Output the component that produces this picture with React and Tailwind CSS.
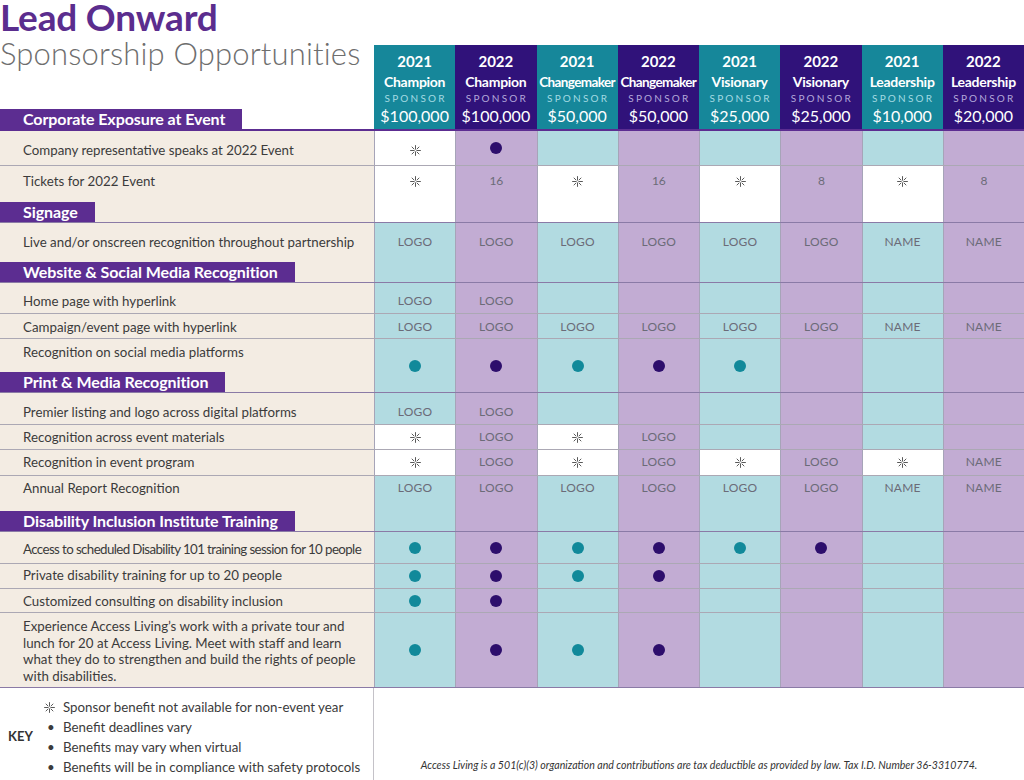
import React from 'react';

const sponsors = [
  { year: '2021', name: 'Champion', amount: '$100,000' },
  { year: '2022', name: 'Champion', amount: '$100,000' },
  { year: '2021', name: 'Changemaker', amount: '$50,000' },
  { year: '2022', name: 'Changemaker', amount: '$50,000' },
  { year: '2021', name: 'Visionary', amount: '$25,000' },
  { year: '2022', name: 'Visionary', amount: '$25,000' },
  { year: '2021', name: 'Leadership', amount: '$10,000' },
  { year: '2022', name: 'Leadership', amount: '$20,000' },
];

const L = 'LOGO';
const N = 'NAME';
const S = '*';
const D = 'dot';

const rows = [
  { label: 'Company representative speaks at 2022 Event', h: 'h-[35px]', pt: 'pt-[11px]', cells: [S, D] },
  { label: 'Tickets for 2022 Event', h: 'h-[57px]', pt: 'pt-[7px]', section: 'Signage', cells: [S, '16', S, '16', S, '8', S, '8'] },
  { label: 'Live and/or onscreen recognition throughout partnership', h: 'h-[60px]', pt: 'pt-[11px]', section: 'Website & Social Media Recognition', cells: [L, L, L, L, L, L, N, N] },
  { label: 'Home page with hyperlink', h: 'h-[31px]', pt: 'pt-[10px]', cells: [L, L] },
  { label: 'Campaign/event page with hyperlink', h: 'h-[25px]', pt: 'pt-[5px]', cells: [L, L, L, L, L, L, N, N] },
  { label: 'Recognition on social media platforms', h: 'h-[54px]', pt: 'pt-[5px]', section: 'Print & Media Recognition', cells: [D, D, D, D, D] },
  { label: 'Premier listing and logo across digital platforms', h: 'h-[32px]', pt: 'pt-[11px]', cells: [L, L] },
  { label: 'Recognition across event materials', h: 'h-[25px]', pt: 'pt-[4px]', cells: [S, L, S, L] },
  { label: 'Recognition in event program', h: 'h-[26px]', pt: 'pt-[4px]', cells: [S, L, S, L, S, L, S, N] },
  { label: 'Annual Report Recognition', h: 'h-[56px]', pt: 'pt-[4px]', section: 'Disability Inclusion Institute Training', cells: [L, L, L, L, L, L, N, N] },
  { label: 'Access to scheduled Disability 101 training session for 10 people', h: 'h-[32px]', pt: 'pt-[9px]', tight: true, cells: [D, D, D, D, D, D] },
  { label: 'Private disability training for up to 20 people', h: 'h-[25px]', pt: 'pt-[3px]', cells: [D, D, D, D] },
  { label: 'Customized consulting on disability inclusion', h: 'h-[24px]', pt: 'pt-[4px]', cells: [D, D] },
  {
    label: 'Experience Access Living\u2019s work with a private tour and lunch for 20 at Access Living. Meet with staff and learn what they do to strengthen and build the rights of people with disabilities.',
    h: 'h-[75px]', pt: 'pt-[5px]', cells: [D, D, D, D], last: true,
  },
];

const Asterisk = ({ size = 11 }) => (
  <svg width={size} height={size} viewBox="0 0 12 12" fill="none" stroke="#4a4a4a" strokeWidth="1" strokeLinecap="round">
    <path d="M6 0.6V4.6M6 7.4V11.4M0.6 6H4.6M7.4 6H11.4M2.2 2.2L4.3 4.3M7.7 7.7L9.8 9.8M9.8 2.2L7.7 4.3M2.2 9.8L4.3 7.7" />
  </svg>
);

const SectionBar = ({ title }) => (
  <div className="self-start h-[20px] bg-[#5c2d91] pl-[23px] pr-[17px] text-[16px] font-bold leading-[20px] text-white whitespace-nowrap tracking-[-0.005em]">
    {title}
  </div>
);

const Cell = ({ value, col, pt }) => {
  const teal = col % 2 === 0;
  const bg = value === S ? 'bg-white' : teal ? 'bg-[#b2dbe1]' : 'bg-[#c2acd3]';
  return (
    <div className={`flex-1 h-full border-l border-[#a6a4b8] ${bg} ${value === D ? 'flex items-center justify-center' : `flex justify-center ${pt}`}`}>
      {value === D && <span className={`w-[12px] h-[12px] rounded-full ${teal ? 'bg-[#11899a]' : 'bg-[#2d0e6c]'}`} />}
      {value === S && <span className="h-[16px] flex items-center"><Asterisk /></span>}
      {value && value !== D && value !== S && (
        <span className={`leading-[16px] text-[#6b6b78] ${value.length > 2 ? 'text-[12px] tracking-[0.02em]' : 'text-[12px]'}`}>{value}</span>
      )}
    </div>
  );
};

const App = () => {
  return (
    <div className="w-[1024px] h-[780px] bg-white overflow-hidden font-['Lato',sans-serif]">
      {/* Header */}
      <div className="flex h-[131px] border-b-2 border-[#5c2d91]">
        <div className="w-[374px] flex flex-col">
          <h1 className="text-[37px] font-bold leading-[33px] text-[#5b2d8e] tracking-[-0.005em]">Lead Onward</h1>
          <h2 className="text-[31px] font-light leading-[34px] text-[#6e6e6e] mt-[3px] tracking-[0.005em] whitespace-nowrap">Sponsorship Opportunities</h2>
          <div className="flex-1" />
          <SectionBar title="Corporate Exposure at Event" />
        </div>
        <div className="flex-1 flex flex-col">
          <div className="h-[45px]" />
          <div className="flex flex-1">
            {sponsors.map((s, i) => {
              const teal = i % 2 === 0;
              return (
                <div key={i} className={`flex-1 flex flex-col items-center text-white ${teal ? 'bg-[#16879a]' : 'bg-[#30127a]'}`}>
                  <div className="mt-[7px] text-[15px] font-bold leading-[18px]">{s.year}</div>
                  <div className={`mt-[2px] font-bold leading-[20px] whitespace-nowrap ${s.name.length > 10 ? 'text-[13.5px] tracking-[-0.045em]' : 'text-[14px] tracking-[-0.02em]'}`}>{s.name}</div>
                  <div className={`text-[10px] leading-[12px] tracking-[0.22em] pl-[2px] ${teal ? 'text-[#a4dbe3]' : 'text-[#b4a9da]'}`}>SPONSOR</div>
                  <div className="mt-[2px] text-[16px] leading-[20px]">{s.amount}</div>
                </div>
              );
            })}
          </div>
        </div>
      </div>

      {/* Rows */}
      {rows.map((r, ri) => (
        <div
          key={ri}
          className={`flex ${r.h} border-b ${r.section || r.last ? 'border-[#8a7aa6]' : 'border-[#aba8b4]'}`}
        >
          <div className="w-[374px] h-full flex flex-col bg-[#f3ece3]">
            <div className={`flex-1 pl-[23px] pr-[8px] text-[13.3px] leading-[16.5px] text-[#3b3b3b] ${r.pt} ${r.tight ? 'tracking-[-0.045em] whitespace-nowrap' : ''}`}>
              {r.label}
            </div>
            {r.section && <SectionBar title={r.section} />}
          </div>
          <div className="flex-1 flex h-full">
            {sponsors.map((_, ci) => (
              <Cell key={ci} value={r.cells[ci]} col={ci} pt={r.pt} />
            ))}
          </div>
        </div>
      ))}

      {/* Key + footer */}
      <div className="flex h-[92px]">
        <div className="w-[374px] h-full border-r border-[#c4c2c8] flex items-center pt-[6px]">
          <div className="w-[44px] pl-[8px] text-[13px] font-bold text-[#333]">KEY</div>
          <ul className="text-[13.3px] leading-[20px] text-[#3b3b3b]">
            <li className="flex items-center">
              <span className="w-[19px] flex justify-start"><Asterisk size={11} /></span>
              Sponsor benefit not available for non-event year
            </li>
            <li className="flex items-center"><span className="w-[19px] pl-[3px]">•</span>Benefit deadlines vary</li>
            <li className="flex items-center"><span className="w-[19px] pl-[3px]">•</span>Benefits may vary when virtual</li>
            <li className="flex items-center"><span className="w-[19px] pl-[3px]">•</span>Benefits will be in compliance with safety protocols</li>
          </ul>
        </div>
        <div className="flex-1 flex items-end justify-center pb-[6px]">
          <p className="text-[10.6px] italic text-[#333]">
            Access Living is a 501(c)(3) organization and contributions are tax deductible as provided by law. Tax I.D. Number 36-3310774.
          </p>
        </div>
      </div>
    </div>
  );
};

export default App;
